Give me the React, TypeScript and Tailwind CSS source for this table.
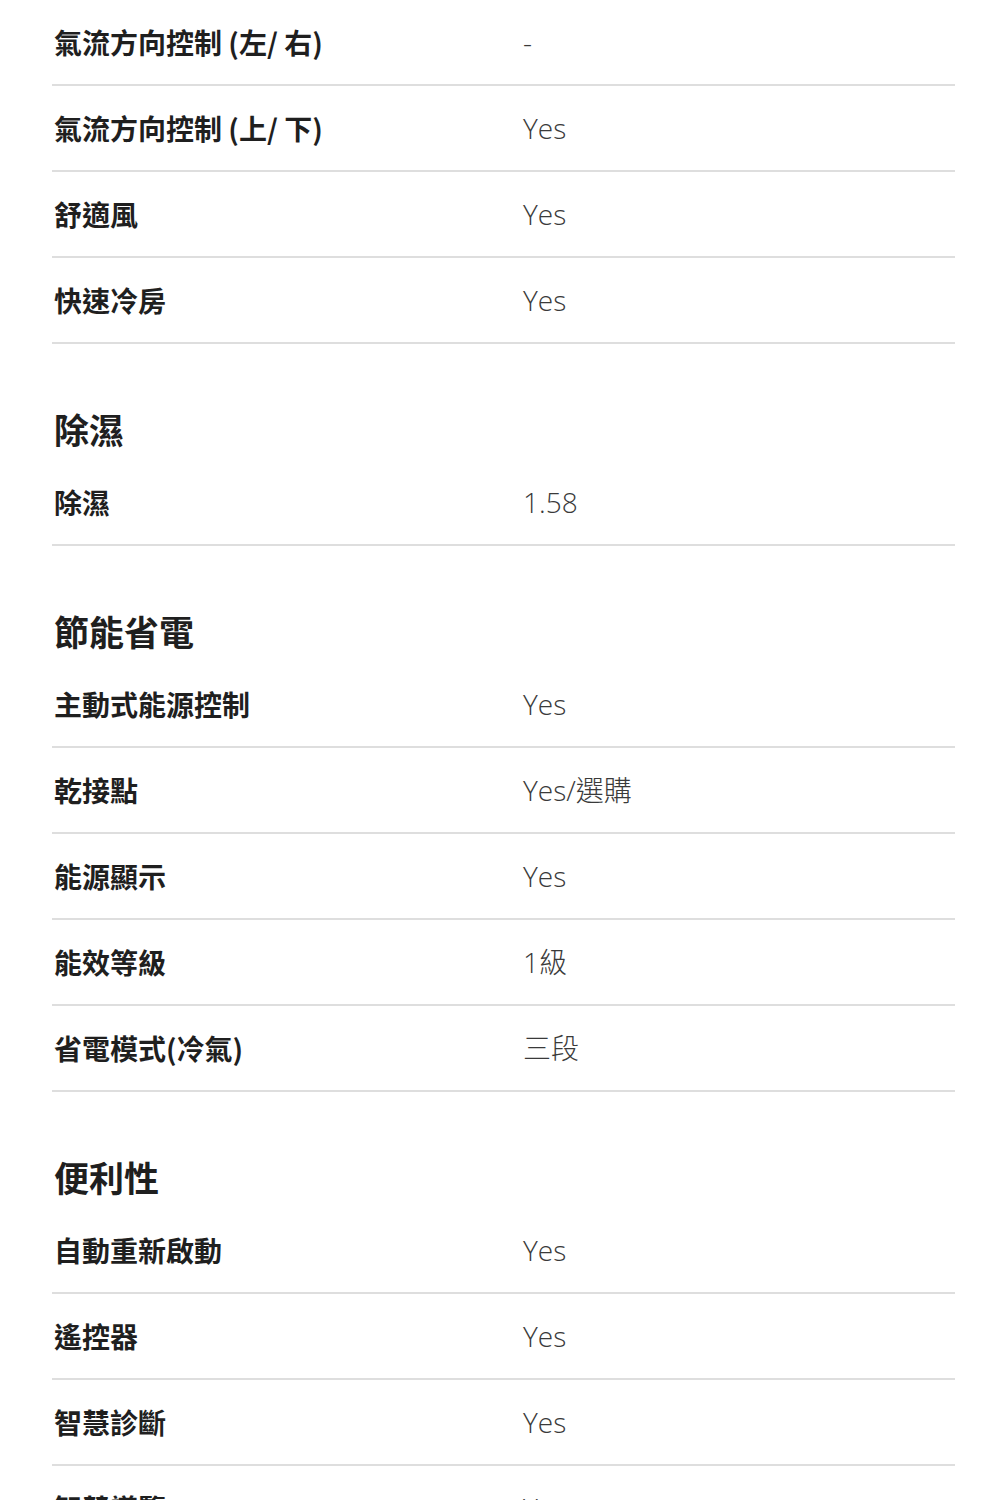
const cjk = "font-['Noto_Sans_CJK_TC','Noto_Sans',sans-serif]"

type Row = { label: string; value: string }
type Section = { title?: string; rows: Row[] }

const sections: Section[] = [
  {
    rows: [
      { label: '氣流方向控制 (左/ 右)', value: '-' },
      { label: '氣流方向控制 (上/ 下)', value: 'Yes' },
      { label: '舒適風', value: 'Yes' },
      { label: '快速冷房', value: 'Yes' },
    ],
  },
  {
    title: '除濕',
    rows: [{ label: '除濕', value: '1.58' }],
  },
  {
    title: '節能省電',
    rows: [
      { label: '主動式能源控制', value: 'Yes' },
      { label: '乾接點', value: 'Yes/選購' },
      { label: '能源顯示', value: 'Yes' },
      { label: '能效等級', value: '1級' },
      { label: '省電模式(冷氣)', value: '三段' },
    ],
  },
  {
    title: '便利性',
    rows: [
      { label: '自動重新啟動', value: 'Yes' },
      { label: '遙控器', value: 'Yes' },
      { label: '智慧診斷', value: 'Yes' },
      { label: '智慧導覽', value: 'Yes' },
    ],
  },
]

function SpecRow({ label, value }: Row) {
  return (
    <div className="flex h-[86px] items-center border-b-2 border-[#dedede]">
      <div className={`w-[471px] shrink-0 pl-[2px] text-[28px] font-bold leading-[36px] text-[#1f1f1f] ${cjk}`}>
        {label}
      </div>
      <div className="font-['Open_Sans','Noto_Sans_CJK_TC',sans-serif] text-[28px] font-light leading-[36px] text-[#3a3a3a]">
        {value}
      </div>
    </div>
  )
}

export default function App() {
  return (
    <div className="min-h-[1500px] bg-white">
      <div className="ml-[52px] w-[903px] pb-20">
        {sections.map((section, i) => (
          <div key={i}>
            {section.title && (
              <h2
                className={`pl-[2px] pt-[65px] pb-[11px] text-[35px] font-bold leading-[40px] text-[#1f1f1f] ${cjk}`}
              >
                {section.title}
              </h2>
            )}
            {section.rows.map(row => (
              <SpecRow key={row.label} {...row} />
            ))}
          </div>
        ))}
      </div>
    </div>
  )
}
